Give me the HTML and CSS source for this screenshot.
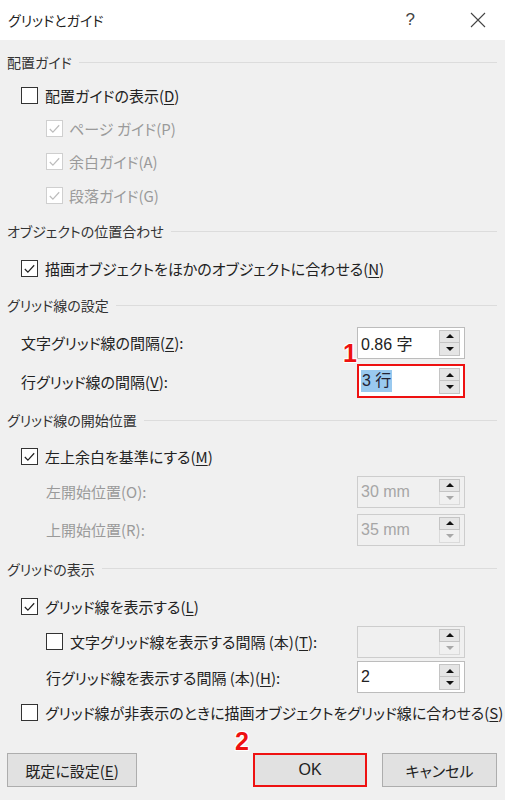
FILE: index.html
```html
<!DOCTYPE html>
<html lang="ja">
<head>
<meta charset="utf-8">
<title>グリッドとガイド</title>
<link rel="stylesheet" href="styles.css">
</head>
<body>
<div class="titlebar">
  <span class="title">グリッドとガイド</span>
  <span class="help">?</span>
  <svg class="close" viewBox="0 0 16 16"><path d="M1 1L15 15M15 1L1 15" stroke="#444" stroke-width="1.1" fill="none"/></svg>
</div>
<div class="content">
  <div class="row head r34"><span>配置ガイド</span><i class="rule"></i></div>
  <div class="row l1 r33"><span class="box"></span><span>配置ガイドの表示(<u>D</u>)</span></div>
  <div class="row l2 r33 dis"><span class="box on"><svg viewBox="0 0 16 16"><path d="M3 8.5L6.3 11.8L13 4.5"/></svg></span><span>ページ ガイド(P)</span></div>
  <div class="row l2 r33 dis"><span class="box on"><svg viewBox="0 0 16 16"><path d="M3 8.5L6.3 11.8L13 4.5"/></svg></span><span>余白ガイド(A)</span></div>
  <div class="row l2 r34 dis"><span class="box on"><svg viewBox="0 0 16 16"><path d="M3 8.5L6.3 11.8L13 4.5"/></svg></span><span>段落ガイド(G)</span></div>

  <div class="row head r38"><span>オブジェクトの位置合わせ</span><i class="rule"></i></div>
  <div class="row l1 r36"><span class="box on"><svg viewBox="0 0 16 16"><path d="M3 8.5L6.3 11.8L13 4.5"/></svg></span><span>描画オブジェクトをほかのオブジェクトに合わせる(<u>N</u>)</span></div>

  <div class="row head r38"><span>グリッド線の設定</span><i class="rule"></i></div>
  <div class="row l1 r37">
    <span>文字グリッド線の間隔(<u>Z</u>):</span>
    <div class="spin"><span class="val">0.86 字</span><span class="btns"><span class="up"><i class="tri-up"></i></span><span class="dn"><i class="tri-dn"></i></span></span></div>
  </div>
  <div class="row l1 r40">
    <span>行グリッド線の間隔(<u>V</u>):</span>
    <div class="spin red"><span class="val"><span class="sel">3 行</span></span><span class="btns"><span class="up"><i class="tri-up"></i></span><span class="dn"><i class="tri-dn"></i></span></span><b class="mark m1">1</b></div>
  </div>

  <div class="row head r38"><span>グリッド線の開始位置</span><i class="rule"></i></div>
  <div class="row l1 r34"><span class="box on"><svg viewBox="0 0 16 16"><path d="M3 8.5L6.3 11.8L13 4.5"/></svg></span><span>左上余白を基準にする(<u>M</u>)</span></div>
  <div class="row l2 r37 dis">
    <span>左開始位置(O):</span>
    <div class="spin off"><span class="val">30 mm</span><span class="btns"><span class="up"><i class="tri-up"></i></span><span class="dn"><i class="tri-dn"></i></span></span></div>
  </div>
  <div class="row l2 r39 dis">
    <span>上開始位置(R):</span>
    <div class="spin off"><span class="val">35 mm</span><span class="btns"><span class="up"><i class="tri-up"></i></span><span class="dn"><i class="tri-dn"></i></span></span></div>
  </div>

  <div class="row head r39"><span>グリッドの表示</span><i class="rule"></i></div>
  <div class="row l1 r36"><span class="box on"><svg viewBox="0 0 16 16"><path d="M3 8.5L6.3 11.8L13 4.5"/></svg></span><span>グリッド線を表示する(<u>L</u>)</span></div>
  <div class="row l2 r35">
    <span class="box"></span><span>文字グリッド線を表示する間隔 (本)(<u>T</u>):</span>
    <div class="spin off"><span class="val"></span><span class="btns"><span class="up"><i class="tri-up"></i></span><span class="dn"><i class="tri-dn"></i></span></span></div>
  </div>
  <div class="row l2 r36">
    <span>行グリッド線を表示する間隔 (本)(<u>H</u>):</span>
    <div class="spin"><span class="val">2</span><span class="btns"><span class="up"><i class="tri-up"></i></span><span class="dn"><i class="tri-dn"></i></span></span></div>
  </div>
  <div class="row l1 r34"><span class="box"></span><span>グリッド線が非表示のときに描画オブジェクトをグリッド線に合わせる(<u>S</u>)</span></div>

  <div class="buttons">
    <button class="btn b-def">既定に設定(<u>E</u>)</button>
    <button class="btn b-ok">OK<b class="mark m2">2</b></button>
    <button class="btn b-cancel">キャンセル</button>
  </div>
</div>
</body>
</html>
```
FILE: styles.css
```css
*{box-sizing:border-box;margin:0;padding:0}
html,body{width:505px;height:800px;overflow:hidden}
body{background:#f0f0f0;font-family:"Noto Sans CJK JP","Noto Sans",sans-serif;font-feature-settings:"palt";color:#222;font-size:15px}
u{text-decoration:underline;text-underline-offset:2px}
.titlebar{height:40px;background:#fff;display:flex;align-items:center;padding-left:8px}
.title{font-size:14px;color:#222;flex:1}
.help{font-family:"Liberation Sans",sans-serif;font-size:17px;color:#444;margin-right:55px}
.close{width:16px;height:16px;margin-right:19px}
.content{padding:5px 8px 0 7px}
.row{display:flex;align-items:center;white-space:nowrap}
.r33{height:33px}.r34{height:34px}.r35{height:35px}.r36{height:36px}.r37{height:37px}.r38{height:38px}.r39{height:39px}.r40{height:40px}
.head{font-size:14px;color:#333}
.rule{flex:1;height:1px;background:#dcdcdc;margin-left:7px}
.l1{padding-left:14px}
.l2{padding-left:39px}
.box{width:17px;height:17px;border:1px solid #333;background:#fff;margin-right:7px;flex:none;display:flex;align-items:center;justify-content:center}
.box svg{width:15px;height:15px}
.box path{fill:none;stroke:#222;stroke-width:1.3}
.dis{color:#9a9a9a}
.dis .box{border-color:#cfcfcf;margin-right:6px}
.dis .box path{stroke:#bdbdbd}
.spin{position:relative;margin-left:auto;margin-right:32px;width:108px;height:32px;border:1px solid #bcbcbc;background:#fff;display:flex;align-items:center;justify-content:space-between;padding:0 4px 0 3px;font-family:"Liberation Sans","Noto Sans CJK JP",sans-serif;font-size:16px;color:#222}
.spin.red{height:34px;border:2px solid #ee1111;padding:0 3px 0 2px}
.spin.off{background:#f0f0f0;border-color:#cdcdcd;color:#a6a6a6}
.val{display:flex;align-items:center;height:22px}
.sel{background:#99c9ef;color:#223;padding:0 1px;line-height:22px}
.btns{display:flex;flex-direction:column;width:21px}
.btns span{height:13px;background:#e5e5e5;border:1px solid #c4c4c4;display:flex;align-items:center;justify-content:center}
.btns .dn{border-top:none}
.tri-up{width:0;height:0;border-left:4px solid transparent;border-right:4px solid transparent;border-bottom:4px solid #111}
.tri-dn{width:0;height:0;border-left:4px solid transparent;border-right:4px solid transparent;border-top:4px solid #111}
.off .dn{background:#f0f0f0;border-color:#dadada}
.off .dn .tri-dn{border-top-color:#a8a8a8}
.mark{position:absolute;font-family:"Liberation Sans",sans-serif;font-weight:bold;font-size:25px;line-height:1;color:#ee1111;text-shadow:-1px -1px 0 #fff,1px -1px 0 #fff,-1px 1px 0 #fff,1px 1px 0 #fff,0 0 2px #fff}
.m1{left:-16px;top:-25px}
.m2{left:-20px;top:-26px}
.buttons{display:flex;margin-top:24px;padding-right:0}
.btn{position:relative;height:34px;background:#e1e1e1;border:1px solid #adadad;font-family:"Noto Sans CJK JP",sans-serif;font-feature-settings:"palt";font-size:15px;color:#222}
.b-def{width:130px}
.b-ok{width:114px;margin-left:auto;border:2px solid #ee1111;font-family:"Liberation Sans",sans-serif;font-size:16px}
.b-cancel{width:115px;margin-left:15px}
```
